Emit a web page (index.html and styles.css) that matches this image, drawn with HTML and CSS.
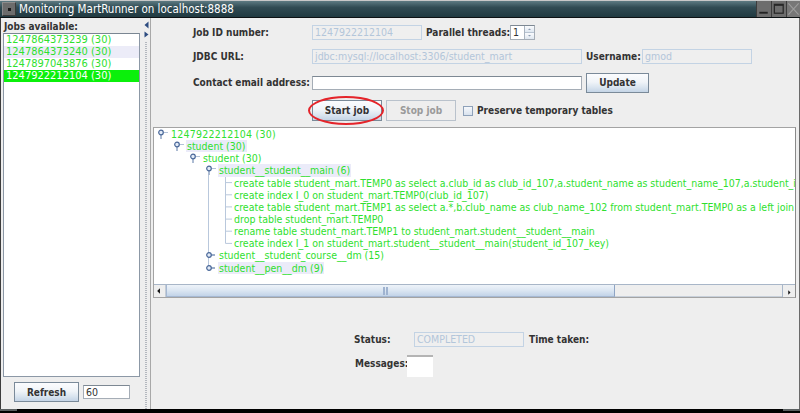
FILE: index.html
```html
<!DOCTYPE html>
<html>
<head>
<meta charset="utf-8">
<title>Monitoring MartRunner on localhost:8888</title>
<link rel="stylesheet" href="styles.css">
</head>
<body>
<svg class="defs" width="0" height="0">
  <defs>
    <symbol id="exp" viewBox="0 0 15 12">
      <line x1="6" y1="7" x2="6" y2="11" stroke="#5b78a6" stroke-width="1"/>
      <line x1="8.5" y1="4.5" x2="13" y2="4.5" stroke="#b3c2d8" stroke-width="1"/>
      <circle cx="6" cy="4.5" r="2.3" fill="#e3ebf7" stroke="#4a6899" stroke-width="1.2"/>
    </symbol>
    <symbol id="col" viewBox="0 0 15 12">
      <line x1="8" y1="6" x2="12" y2="6" stroke="#5b78a6" stroke-width="1.2"/>
      <circle cx="6" cy="6" r="2.3" fill="#e3ebf7" stroke="#4a6899" stroke-width="1.2"/>
    </symbol>
  </defs>
</svg>
<div class="window">
  <div class="titlebar">
    <div class="tb-menu"><span></span></div>
    <div class="tb-title">Monitoring MartRunner on localhost:8888</div>
    <div class="tb-buttons">
      <div class="tb-btn"><svg width="15" height="16" viewBox="0 0 15 16"><rect x="2.5" y="11" width="9" height="2" fill="#222"/></svg></div>
      <div class="tb-btn"><svg width="15" height="16" viewBox="0 0 15 16"><rect x="2.5" y="3" width="9.5" height="9.5" fill="none" stroke="#262626" stroke-width="1.3"/><rect x="2.5" y="3" width="9.5" height="1.6" fill="#262626"/></svg></div>
      <div class="tb-btn close"><svg width="14" height="16" viewBox="0 0 14 16"><path d="M1.5 2 L12.5 14 M12.5 2 L1.5 14" stroke="#9c9c9c" stroke-width="1.2"/></svg></div>
    </div>
  </div>

  <div class="main">
    <div class="left">
      <div class="lbl jobs-lbl">Jobs available:</div>
      <div class="joblist">
        <div class="job">1247864373239 (30)</div>
        <div class="job alt">1247864373240 (30)</div>
        <div class="job">1247897043876 (30)</div>
        <div class="job sel">1247922212104 (30)</div>
      </div>
      <div class="left-bottom">
        <div class="btn refresh">Refresh</div>
        <div class="field refresh-field">60</div>
      </div>
    </div>

    <div class="splitter">
      <svg class="split-arrows" width="9" height="22" viewBox="0 0 9 22">
        <polygon points="6.5,3.5 2.5,7 6.5,10.5" fill="#2d4c80"/>
        <polygon points="2.5,13.5 6.5,16.5 2.5,19.5" fill="#2d4c80"/>
      </svg>
      <div class="grip"></div>
    </div>

    <div class="right">
      <div class="row row1">
        <div class="lbl col1">Job ID number:</div>
        <div class="field dis w110">1247922212104</div>
        <div class="lbl lbl-threads">Parallel threads:</div>
        <div class="spinner">
          <div class="spin-val">1</div>
          <div class="spin-btns">
            <div class="spin-b"><svg width="9" height="6" viewBox="0 0 9 6"><polygon points="3,4 4.5,2.5 6,4" fill="#8a9ab0"/></svg></div>
            <div class="spin-b"><svg width="9" height="6" viewBox="0 0 9 6"><polygon points="3,2 4.5,3.5 6,2" fill="#8a9ab0"/></svg></div>
          </div>
        </div>
      </div>
      <div class="row row2">
        <div class="lbl col1">JDBC URL:</div>
        <div class="field dis w270">jdbc:mysql://localhost:3306/student_mart</div>
        <div class="lbl lbl-user">Username:</div>
        <div class="field dis w110">gmod</div>
      </div>
      <div class="row row3">
        <div class="lbl col1">Contact email address:</div>
        <div class="field en w270"></div>
        <div class="btn update">Update</div>
      </div>
      <div class="row actions">
        <div class="start-wrap">
          <div class="btn start">Start job</div>
          <div class="ring"></div>
        </div>
        <div class="btn disabled stop">Stop job</div>
        <div class="check"></div>
        <div class="lbl">Preserve temporary tables</div>
      </div>

      <div class="treepane">
        <div class="tree">
          <svg class="legs" width="641" height="156" viewBox="0 0 641 156">
            <line x1="54.5" y1="47" x2="54.5" y2="139.7" stroke="#b9c8dc"/>
            <line x1="71.5" y1="48.6" x2="71.5" y2="115.4" stroke="#b9c8dc"/>
            <line x1="71.5" y1="54.6" x2="78" y2="54.6" stroke="#b9c8dc"/>
            <line x1="71.5" y1="66.8" x2="78" y2="66.8" stroke="#b9c8dc"/>
            <line x1="71.5" y1="78.9" x2="78" y2="78.9" stroke="#b9c8dc"/>
            <line x1="71.5" y1="91.1" x2="78" y2="91.1" stroke="#b9c8dc"/>
            <line x1="71.5" y1="103.2" x2="78" y2="103.2" stroke="#b9c8dc"/>
            <line x1="71.5" y1="115.4" x2="78" y2="115.4" stroke="#b9c8dc"/>
          </svg>
          <div class="tr d0"><svg class="ic"><use href="#exp"/></svg><span class="tx num">1247922212104 (30)</span></div>
          <div class="tr d1"><svg class="ic"><use href="#exp"/></svg><span class="tx hl">student (30)</span></div>
          <div class="tr d2"><svg class="ic"><use href="#exp"/></svg><span class="tx">student (30)</span></div>
          <div class="tr d3"><svg class="ic"><use href="#exp"/></svg><span class="tx hl">student__student__main (6)</span></div>
          <div class="tr leaf"><span class="tx">create table student_mart.TEMP0 as select a.club_id as club_id_107,a.student_name as student_name_107,a.student_id</span></div>
          <div class="tr leaf"><span class="tx">create index I_0 on student_mart.TEMP0(club_id_107)</span></div>
          <div class="tr leaf"><span class="tx">create table student_mart.TEMP1 as select a.*,b.club_name as club_name_102 from student_mart.TEMP0 as a left join</span></div>
          <div class="tr leaf"><span class="tx">drop table student_mart.TEMP0</span></div>
          <div class="tr leaf"><span class="tx">rename table student_mart.TEMP1 to student_mart.student__student__main</span></div>
          <div class="tr leaf"><span class="tx">create index I_1 on student_mart.student__student__main(student_id_107_key)</span></div>
          <div class="tr d3"><svg class="ic"><use href="#col"/></svg><span class="tx">student__student_course__dm (15)</span></div>
          <div class="tr d3"><svg class="ic"><use href="#col"/></svg><span class="tx hl">student__pen__dm (9)</span></div>
        </div>
        <div class="hscroll">
          <div class="sb-btn"><svg width="12" height="12" viewBox="0 0 12 12"><polygon points="6.5,3 3.5,6 6.5,9" fill="#111"/></svg></div>
          <div class="sb-thumb"><span class="sb-grip"></span></div>
          <div class="sb-track"></div>
          <div class="sb-btn right"><svg width="12" height="12" viewBox="0 0 12 12"><polygon points="5,3 8,6 5,9" fill="#111"/></svg></div>
        </div>
      </div>

      <div class="row status-row">
        <div class="lbl lbl-status">Status:</div>
        <div class="field dis w110">COMPLETED</div>
        <div class="lbl lbl-time">Time taken:</div>
      </div>
      <div class="row msg-row">
        <div class="lbl lbl-msg">Messages:</div>
        <div class="msgbox"></div>
      </div>
    </div>
  </div>

  <div class="bottombar"><span class="corner"></span><span class="corner"></span></div>
</div>
</body>
</html>
```

FILE: styles.css
```css
* { box-sizing: border-box; margin: 0; padding: 0; }
html, body { width: 800px; height: 413px; overflow: hidden; background: #000; }
body {
  font-family: "DejaVu Sans Condensed", "DejaVu Sans", sans-serif;
  font-stretch: condensed;
  color: #333;
}
.defs { position: absolute; width: 0; height: 0; }

.window { width: 800px; height: 413px; display: flex; flex-direction: column; background: #eeeeee; }

/* title bar */
.titlebar {
  height: 18px; flex: none; display: flex; align-items: center;
  background: linear-gradient(#5d7a82, #304b53 40%, #213a41);
  border-top: 1px solid #c8c8c8; border-bottom: 1px solid #0d1214;
}
.tb-menu {
  width: 14px; height: 14px; margin-left: 2px; background: #6c6c6c;
  border: 1px solid #8c8c8c; border-right-color: #3a3a3a; border-bottom-color: #3a3a3a;
  display: flex; align-items: center; justify-content: center;
}
.tb-menu span { width: 3px; height: 3px; background: #1a1a1a; }
.tb-title { flex: 1; margin-left: 3px; color: #ffffff; font-size: 11.5px; line-height: 16px; white-space: nowrap; }
.tb-buttons { display: flex; height: 16px; }
.tb-btn { width: 15px; height: 16px; background: #6d6d6d; border-left: 1px solid #3c3c3c; display: flex; }
.tb-btn.close { width: 14px; background: #777; }

/* main split */
.main { flex: 1; display: flex; min-height: 0; border-left: 1px solid #3d3d3d; border-right: 1px solid #6a6a6a; }

.left { width: 140px; flex: none; padding-left: 2px; display: flex; flex-direction: column; }
.lbl { font-size: 10px; font-weight: bold; color: #333; white-space: nowrap; }
.jobs-lbl { padding: 2px 0 0 1px; line-height: 13px; height: 15px; }
.joblist {
  width: 137px; height: 344px; background: #fff; border: 1px solid #8c98a6; border-top-color: #7a8692;
  font-size: 11px; color: #2fe02f;
}
.job { height: 12px; line-height: 12px; padding-left: 2px; white-space: nowrap; }
.job.alt { background: #ececf8; }
.job.sel { background: #0bf00b; color: #fff; }
.left-bottom { display: flex; align-items: center; margin-top: 5px; padding-left: 11px; }

.btn {
  display: flex; align-items: center; justify-content: center;
  font-size: 10px; font-weight: bold; color: #333; white-space: nowrap;
  border: 1px solid #7a8a99;
  background: linear-gradient(#fbfcfe 0%, #f0f4f8 45%, #d9e4ef 75%, #c4d4e6 100%);
}
.refresh { width: 65px; height: 20px; }
.field {
  height: 15px; font-size: 10.5px; line-height: 13px; padding-left: 2px; white-space: nowrap; overflow: hidden;
}
.refresh-field {
  width: 47px; height: 14px; margin-left: 4px; background: #fff; border: 1px solid #a5adb6; border-top-color: #7d8893;
  color: #333; font-size: 10.5px; line-height: 12px;
}

/* splitter */
.splitter { width: 9px; flex: none; display: flex; flex-direction: column; align-items: flex-start; }
.split-arrows { flex: none; margin-top: 0; margin-left: 1px; }
.grip {
  flex: 1; width: 2px; margin-left: 4px; margin-top: 2px;
  background-image: repeating-linear-gradient(#b4b8bf 0 1px, transparent 1px 2px);
}

/* right panel */
.right { flex: 1; border-left: 1px solid #a8a8a8; padding-top: 3px; display: flex; flex-direction: column; }
.row { display: flex; align-items: center; flex: none; }
.row1 { height: 23px; padding-left: 42px; }
.row2 { height: 25px; padding-left: 42px; }
.row3 { height: 27px; padding-left: 42px; }
.col1 { width: 119px; }
.dis { background: #efefef; border: 1px solid #c3d3e4; color: #b3c6da; }
.en { background: #fff; border: 1px solid #a5adb6; border-top-color: #7d8893; height: 14px; }
.w110 { width: 110px; }
.w270 { width: 270px; }
.lbl-threads { width: 84px; margin-left: 4px; }
.lbl-user { width: 56px; margin-left: 4px; }
.update { width: 63px; height: 20px; margin-left: 4px; }

.spinner { width: 25px; height: 15px; display: flex; border: 1px solid #a5adb6; border-top-color: #7d8893; }
.spin-val { width: 13px; background: #fff; font-size: 10.5px; line-height: 13px; padding-left: 2px; color: #333; }
.spin-btns { flex: 1; display: flex; flex-direction: column; border-left: 1px solid #aab4c0; }
.spin-b { flex: 1; display: flex; align-items: center; justify-content: center;
  background: linear-gradient(#fafbfd, #dfe7f0); border-bottom: 1px solid #b8c4d2; overflow: hidden; }
.spin-b:last-child { border-bottom: none; }

.actions { height: 21px; margin-top: 4px; padding-left: 161px; }
.start-wrap { position: relative; }
.start { width: 70px; height: 21px; }
.ring {
  position: absolute; left: -4px; top: -4px; width: 76px; height: 29px;
  border: 2px solid #e4242a; border-radius: 50%;
}
.stop { width: 70px; height: 21px; margin-left: 4px; }
.btn.disabled { background: #eeeeee; border-color: #b9c2cc; color: #9a9a9a; }
.check {
  width: 10px; height: 10px; margin-left: 7px; margin-right: 4px;
  border: 1px solid #8ea1b9; background: linear-gradient(#f6f8fb, #d8e2ee);
}

/* tree */
.treepane {
  flex: none; margin-top: 6px; margin-left: 2px; width: 643px; height: 171px;
  border: 1px solid #a3a3a3; border-right-color: #8a8a8a; display: flex; flex-direction: column;
}
.tree { height: 156px; background: #fff; position: relative; overflow: hidden; font-size: 10.5px; color: #2fdf2f; }
.legs { position: absolute; left: 0; top: 0; }
.tr { position: relative; height: 12.15px; line-height: 12.15px; display: flex; white-space: nowrap; }
.ic { width: 15px; height: 12px; flex: none; margin-left: 1px; }
.tx { padding: 0 1px; }
.num { letter-spacing: 0.25px; }
.hl { background: #ebebf9; }
.d0 { padding-left: 0; }
.d1 { padding-left: 16px; }
.d2 { padding-left: 32px; }
.d3 { padding-left: 48px; }
.leaf { padding-left: 79px; }

.hscroll { height: 13px; display: flex; border-top: 1px solid #a8b6c8; background: #eeeeee; }
.sb-btn { width: 12px; height: 12px; flex: none; display: flex; background: #eeeeee; border-right: 1px solid #c4ccd6; }
.sb-btn.right { width: 13px; border-right: none; border-left: 1px solid #a8b6c8; }
.sb-thumb {
  width: 449px; flex: none; display: flex; align-items: center; justify-content: center;
  background: linear-gradient(#eef3f9, #dbe6f2 50%, #c2d3e8);
  border-left: 1px solid #a5b8d2; border-right: 1px solid #8ea4c4; border-bottom: 1px solid #a5b8d2;
}
.sb-grip { width: 5px; height: 8px; border-left: 2px solid #9fb3d0; border-right: 2px solid #9fb3d0; margin-left: -10px; }
.sb-track { flex: 1; background: #eeeeee; border-bottom: 1px solid #c8d0da; }

/* status */
.status-row { height: 15px; margin-top: 34px; padding-left: 203px; }
.lbl-status { width: 60px; }
.lbl-time { margin-left: 5px; }
.msg-row { height: 22px; margin-top: 8px; padding-left: 204px; align-items: flex-start; }
.lbl-msg { width: 52px; line-height: 14px; margin-top: 2px; }
.msgbox { width: 26px; height: 22px; background: #fff; border-top: 2px solid #b4b4b4; }

.bottombar { height: 4px; flex: none; background: #000; display: flex; justify-content: space-between; }
.corner { width: 17px; height: 2px; background: #5a5f60; }
```
